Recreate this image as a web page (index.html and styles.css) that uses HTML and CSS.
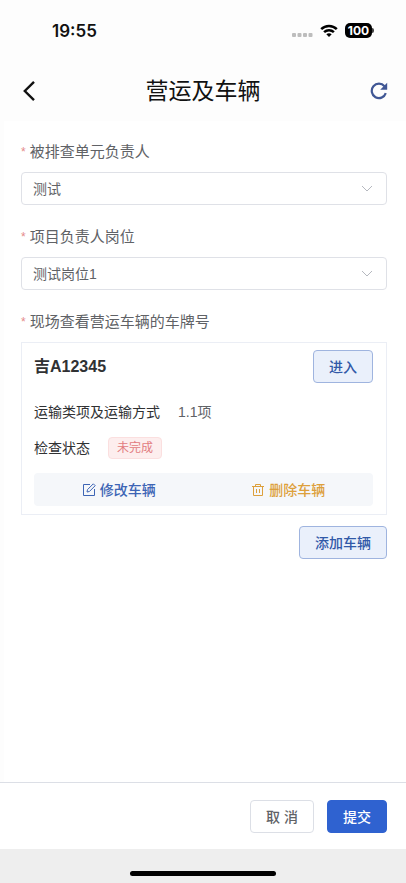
FILE: index.html
```html
<!DOCTYPE html>
<html lang="zh-CN">
<head>
<meta charset="utf-8">
<meta name="viewport" content="width=device-width, initial-scale=1">
<title>营运及车辆</title>
<link rel="stylesheet" href="styles.css">
</head>
<body>
<div class="status-bar">
  <span class="clock">19:55</span>
  <div class="status-icons">
    <svg class="signal" width="22" height="12" viewBox="0 0 22 12" fill="#bdbdbd"><rect x="1" y="8" width="4" height="4" rx="1"/><rect x="6.500" y="8" width="4" height="4" rx="1"/><rect x="12" y="8" width="4" height="4" rx="1"/><rect x="17.500" y="8" width="4" height="4" rx="1"/></svg>
    <svg width="18" height="14" viewBox="0 0 18 14" fill="none" stroke="#000" stroke-width="2.500"><path d="M1.200 5.100C5.500.900 12.500.900 16.800 5.100"/><path d="M4.100 8.200c2.800-2.700 7-2.700 9.800 0"/><path d="M6.300 10.300Q9 8.300 11.700 10.300L9 13z" fill="#000" stroke="none"/></svg>
    <span class="battery">100</span>
  </div>
</div>
<header class="nav">
  <button class="icon-button" type="button" aria-label="返回"><svg width="14" height="22" viewBox="0 0 14 22" fill="none" stroke="#111" stroke-width="2.400"><path d="M12 1.800 2.800 11 12 20.200"/></svg></button>
  <h1>营运及车辆</h1>
  <button class="icon-button" type="button" aria-label="刷新"><svg width="18" height="18" viewBox="0 0 18 18"><path d="M15.800 11.200A7.200 7.200 0 1 1 14.500 4.300" fill="none" stroke="#405795" stroke-width="2.200"/><path d="M17.200.800v7h-7z" fill="#405795"/></svg></button>
</header>
<main class="form">
  <div class="field">
    <label class="label" for="leader">被排查单元负责人</label>
    <div class="select-box">
      <select id="leader"><option>测试</option></select>
      <svg class="chevron" width="12" height="7" viewBox="0 0 12 7"><path d="m1 1 5 5 5-5"/></svg>
    </div>
  </div>
  <div class="field">
    <label class="label" for="post">项目负责人岗位</label>
    <div class="select-box">
      <select id="post"><option>测试岗位1</option></select>
      <svg class="chevron" width="12" height="7" viewBox="0 0 12 7"><path d="m1 1 5 5 5-5"/></svg>
    </div>
  </div>
  <section>
    <div class="label" id="plates">现场查看营运车辆的车牌号</div>
    <article class="card" aria-labelledby="plates">
      <div class="card-head"><h2>吉A12345</h2><button class="button plain" type="button">进入</button></div>
      <div class="row"><span>运输类项及运输方式</span><span class="value">1.1项</span></div>
      <div class="row"><span>检查状态</span><span class="tag">未完成</span></div>
      <div class="actions">
        <button class="action edit" type="button"><svg width="14" height="14" viewBox="0 0 14 14" fill="none" stroke="currentColor"><path d="M8 1.500H1.500v11h11V6"/><path d="m5 9 .5-2.400 5.800-5.800 1.900 1.900-5.800 5.800z"/></svg>修改车辆</button>
        <button class="action remove" type="button"><svg width="14" height="14" viewBox="0 0 14 14" fill="none" stroke="currentColor"><path d="M1 3.500h12M4.500 3.500v-2h5v2M2.500 3.500v9h9v-9M5.500 6v4M8.500 6v4"/></svg>删除车辆</button>
      </div>
    </article>
    <div class="add"><button class="button plain" type="button">添加车辆</button></div>
  </section>
</main>
<footer class="footer">
  <button class="button cancel" type="button">取 消</button>
  <button class="button primary" type="button">提交</button>
</footer>
<div class="home-area"><div class="home-bar"></div></div>
</body>
</html>
```
FILE: styles.css
```css
* { box-sizing: border-box; }

body {
  margin: 0;
  min-height: 100vh;
  display: flex;
  flex-direction: column;
  background: #fdfdfd;
  color: #303133;
  font: 14px/20px "Liberation Sans", "Noto Sans CJK SC", sans-serif;
}

button, select { font: inherit; color: inherit; }
button { cursor: pointer; }
h1, h2 { margin: 0; }
svg { display: block; }

.status-bar {
  display: flex;
  justify-content: space-between;
  align-items: center;
  height: 61px;
  padding: 0 32px 0 52px;
}
.clock { font: 600 17px/22px Inter, sans-serif; color: #111; }
.status-icons { display: flex; align-items: center; gap: 7px; }
.battery {
  position: relative;
  width: 27px;
  margin-right: 2px;
  border-radius: 5px;
  background: #000;
  color: #fff;
  font: 700 12px/15px Inter, sans-serif;
  text-align: center;
}
.battery::after {
  content: "";
  position: absolute;
  left: 100%;
  top: 5px;
  width: 2px;
  height: 5px;
  border-radius: 0 2px 2px 0;
  background: #444;
}

.nav {
  display: flex;
  justify-content: space-between;
  align-items: center;
  height: 60px;
  padding: 0 18px 0 22px;
}
.nav h1 { font-size: 23px; line-height: 32px; font-weight: 400; color: #111; }
.icon-button { padding: 0; border: 0; background: none; }

.form {
  flex: 1;
  margin-left: 4px;
  padding: 21px 19px 24px 17px;
  background: #fff;
}
.field { margin-bottom: 22px; }
.label {
  display: flex;
  gap: 4px;
  margin-bottom: 10px;
  font-size: 15px;
  color: #606266;
}
.label::before { content: "*"; font-size: 12px; color: #e58a8a; }

.select-box { display: grid; align-items: center; }
.select-box select {
  grid-area: 1 / 1;
  width: 100%;
  height: 33px;
  padding: 0 32px 0 11px;
  border: 1px solid #dfe1e7;
  border-radius: 4px;
  background: #fff;
  color: #606266;
  appearance: none;
}
.chevron {
  grid-area: 1 / 1;
  justify-self: end;
  margin-right: 14px;
  pointer-events: none;
  fill: none;
  stroke: #b5b8bf;
}

.card { padding: 7px 13px 8px 12px; border: 1px solid #ebeef5; }
.card-head {
  display: flex;
  justify-content: space-between;
  align-items: center;
  margin-bottom: 18px;
}
.card-head h2 { font-size: 16px; line-height: 24px; }
.row { display: flex; align-items: center; gap: 18px; height: 22px; margin-bottom: 14px; }
.value { color: #606266; }
.tag {
  padding: 0 8px;
  border: 1px solid #fbdfdf;
  border-radius: 4px;
  background: #fdeeee;
  color: #e27b80;
  font-size: 12px;
  line-height: 20px;
}
.actions { display: flex; border-radius: 4px; background: #f5f7fa; }
.action {
  flex: 1;
  display: flex;
  justify-content: center;
  align-items: center;
  gap: 4px;
  height: 33px;
  padding: 0;
  border: 0;
  background: none;
  font-weight: 500;
}
.edit { color: #3d65b5; }
.remove { color: #dda03c; }

.button {
  height: 33px;
  padding: 0 15px;
  border: 1px solid;
  border-radius: 4px;
  font-weight: 500;
}
.plain { border-color: #9fb4df; background: #eaf0fb; color: #3159a8; }
.cancel { border-color: #dcdfe6; background: #fff; color: #606266; }
.primary { border-color: #2f62d0; background: #2f62d0; color: #fff; }
.add { display: flex; justify-content: flex-end; margin-top: 11px; }

.footer {
  display: flex;
  justify-content: flex-end;
  gap: 13px;
  margin-top: auto;
  padding: 17px 19px 16px;
  border-top: 1px solid #dcdfe6;
  background: #fff;
}
.home-area { display: flex; justify-content: center; padding: 22px 0 7px; background: #eee; }
.home-bar { width: 36%; height: 5px; border-radius: 3px; background: #000; }
```
